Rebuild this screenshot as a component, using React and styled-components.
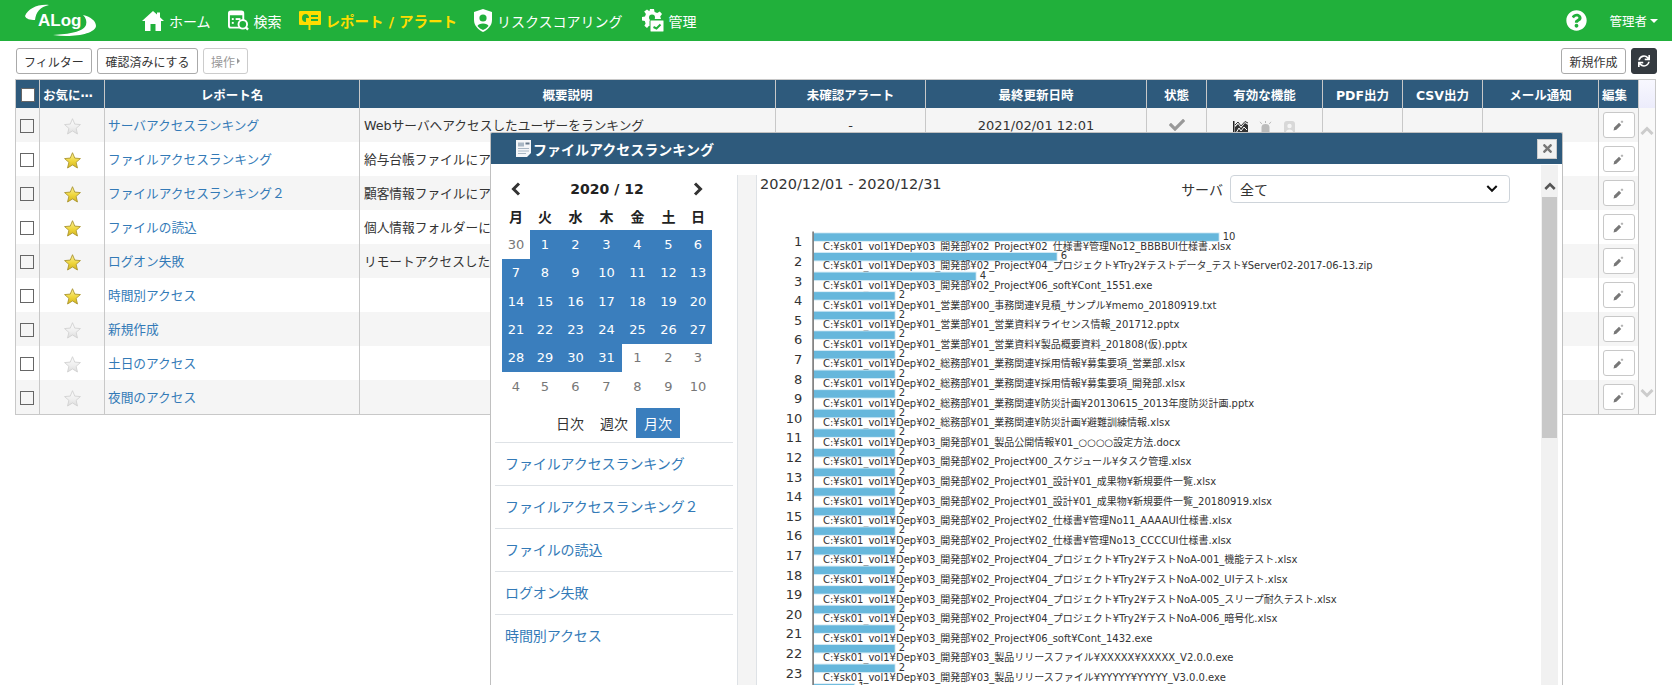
import React from 'react';
import styled, { createGlobalStyle } from 'styled-components';
import { FaCheck, FaSync, FaTimes, FaQuestionCircle } from 'react-icons/fa';

const green = '#21b03b';
const navy = '#2e5a7c';
const blue = '#3a7ebd';
const link = '#337ab7';

const GlobalStyle = createGlobalStyle`
  html, body {
    margin: 0;
    height: 685px;
    overflow: hidden;
    background: #fff;
    color: #333;
    font-family: "DejaVu Sans", "Noto Sans CJK JP", sans-serif;
    font-size: 13px;
  }
  * { box-sizing: border-box; }
`;

const Header = styled.header`
  display: flex;
  align-items: center;
  height: 41px;
  padding-left: 25px;
  padding-right: 14px;
  background: ${green};
  color: #fff;
`;

const Logo = styled.svg`
  display: block;
  width: 71px;
  height: 36px;
  margin-right: 46px;
  margin-top: 2px;
`;

const Nav = styled.nav`
  display: flex;
  align-items: center;
  gap: 17px;
`;

const NavItem = styled.a`
  display: flex;
  align-items: center;
  gap: 5px;
  margin-left: ${p => p.$ml || 0}px;
  font-size: ${p => (p.$active ? '14.5px' : '14px')};
  color: ${p => (p.$active ? '#ffdc00' : '#fff')};
  font-weight: ${p => (p.$active ? 700 : 400)};
  white-space: nowrap;
  svg { display: block; flex: none; }
`;

const HeaderRight = styled.div`
  display: flex;
  align-items: center;
  gap: 22px;
  margin-left: auto;
`;

const UserMenu = styled.span`
  display: flex;
  align-items: center;
  gap: 3px;
  font-size: 12.5px;
  &::after {
    content: '';
    border-top: 4px solid #fff;
    border-left: 4px solid transparent;
    border-right: 4px solid transparent;
  }
`;

const Toolbar = styled.div`
  display: flex;
  align-items: center;
  justify-content: space-between;
  padding: 7px 15px 5px 16px;
`;

const ButtonRow = styled.div`
  display: flex;
  gap: 5px;
`;

const Button = styled.button`
  display: flex;
  align-items: center;
  justify-content: center;
  height: 26px;
  width: ${p => p.$w}px;
  padding: 0;
  background: ${p => (p.$dark ? '#343a40' : '#fff')};
  border: 1px solid ${p => (p.$dark ? '#343a40' : p.$disabled ? '#ccc' : '#aaa')};
  border-radius: 3px;
  font: inherit;
  font-size: 12px;
  color: ${p => (p.$dark ? '#fff' : p.$disabled ? '#999' : '#333')};
`;

const Caret = styled.span`
  margin-left: 2px;
  border-left: 3px solid #999;
  border-top: 3px solid transparent;
  border-bottom: 3px solid transparent;
`;

const TableFrame = styled.div`
  display: flex;
  width: 1641px;
  margin-left: 15px;
  border: 1px solid #c8c8c8;
`;

const Table = styled.table`
  width: 1622px;
  table-layout: fixed;
  border-collapse: separate;
  border-spacing: 0;
`;

const Th = styled.th`
  height: 28px;
  padding: 0 0 0 ${p => (p.$left ? '3px' : '0')};
  background: ${navy};
  color: #fff;
  font-size: 12.5px;
  font-weight: 700;
  text-align: ${p => (p.$left ? 'left' : 'center')};
  white-space: nowrap;
  overflow: hidden;
  border-left: 1px solid #c8c8c8;
  &:first-child { border-left: 0; }
`;

const Row = styled.tr`
  background: ${p => (p.$stripe ? '#f5f5f5' : '#fff')};
`;

const Td = styled.td`
  height: 34px;
  padding: 0;
  text-align: center;
  border-left: 1px solid #c8c8c8;
  white-space: nowrap;
  overflow: hidden;
  svg { vertical-align: middle; }
  &:first-child {
    border-left: 0;
    padding-right: 1px;
  }
`;

const TextCell = styled(Td)`
  padding: 0 4px 2px ${p => p.$pl || 4}px;
  text-align: left;
  font-size: 12.7px;
`;

const StarCell = styled(Td)`
  svg { margin-top: 2px; }
`;

const RowLink = styled.a`
  color: ${link};
`;

const Check = styled.span`
  display: inline-block;
  width: 14px;
  height: 14px;
  vertical-align: middle;
  border: 1px solid #666;
  background: ${p => (p.$head ? '#fff' : 'transparent')};
`;

const FeatureIcons = styled.div`
  display: flex;
  justify-content: center;
  gap: 11px;
  margin-top: 5px;
`;

const EditButton = styled.span`
  display: inline-flex;
  align-items: center;
  justify-content: center;
  width: 32px;
  height: 26px;
  background: #fff;
  border: 1px solid #c8c8c8;
  border-radius: 3px;
`;

const TableRail = styled.div`
  flex: 1;
  display: flex;
  flex-direction: column;
  border-left: 1px solid #c8c8c8;
  background: #f9f9f9;
`;

const RailHead = styled.div`
  height: 28px;
  background: linear-gradient(#f8f8ff, #ececfb);
`;

const RailBody = styled.div`
  flex: 1;
  display: flex;
  flex-direction: column;
  align-items: center;
  justify-content: space-between;
  padding: 18px 0 16px;
`;

const Modal = styled.section`
  position: fixed;
  top: 132px;
  left: 490px;
  width: 1073px;
  height: 553px;
  display: flex;
  flex-direction: column;
  overflow: hidden;
  background: #fff;
  border: 1px solid #c0c0c0;
  border-bottom: 0;
  border-radius: 2px 2px 0 0;
`;

const ModalHeader = styled.div`
  display: flex;
  align-items: center;
  flex: none;
  height: 31px;
  padding: 0 5px 0 25px;
  gap: 2px;
  background: ${navy};
  color: #fff;
  font-size: 14px;
  font-weight: 700;
`;

const CloseBox = styled.span`
  display: flex;
  align-items: center;
  justify-content: center;
  width: 20px;
  height: 20px;
  margin-left: auto;
  background: #f2f2f2;
  border: 1px solid #ccc;
  color: #777;
`;

const ModalBody = styled.div`
  flex: 1;
  display: flex;
  min-height: 0;
  padding-top: 1px;
`;

const LeftPane = styled.div`
  flex: none;
  width: 246px;
  padding: 11px 4px 0;
`;

const CalGrid = styled.div`
  display: grid;
  grid-template-columns: 28px 30px 31px 31px 31px 31px 28px;
  grid-auto-rows: 28.35px;
  align-items: stretch;
  width: 210px;
  margin-left: 7px;
`;

const MonthRow = styled.div`
  display: grid;
  grid-template-columns: 28px 1fr 28px;
  align-items: center;
  justify-items: center;
  width: 210px;
  height: 26px;
  margin-left: 7px;
  font-size: 14px;
  font-weight: 700;
  color: #222;
`;

const WeekDay = styled.div`
  display: flex;
  align-items: center;
  justify-content: center;
  font-size: 14px;
  font-weight: 700;
  color: #222;
`;

const Day = styled.div`
  display: flex;
  align-items: center;
  justify-content: center;
  background: ${p => (p.$active ? blue : 'transparent')};
  color: ${p => (p.$active ? '#fff' : '#777')};
`;

const RangeTabs = styled.div`
  display: flex;
  justify-content: flex-end;
  width: 210px;
  margin: 8px 0 4px 7px;
  padding-right: 32px;
`;

const RangeTab = styled.span`
  display: flex;
  align-items: center;
  justify-content: center;
  width: 44px;
  height: 30px;
  font-size: 14px;
  background: ${p => (p.$active ? blue : 'transparent')};
  color: ${p => (p.$active ? '#fff' : '#333')};
`;

const ReportItem = styled.a`
  display: flex;
  align-items: center;
  height: 43px;
  padding: 0 0 3px 10px;
  border-top: 1px solid #dee2e6;
  font-size: 14px;
  letter-spacing: -0.1px;
  color: ${link};
`;

const Gutter = styled.div`
  flex: none;
  width: 20px;
  margin-top: 10px;
  background: #f4f4f4;
  border-left: 1px solid #dee2e6;
  border-right: 1px solid #dee2e6;
`;

const ChartPane = styled.div`
  flex: 1;
  min-width: 0;
`;

const ChartTop = styled.div`
  display: flex;
  justify-content: space-between;
  height: 40px;
  padding: 10px 31px 0 3px;
`;

const DateRange = styled.div`
  font-size: 14.5px;
  line-height: 18px;
`;

const ServerFilter = styled.div`
  display: flex;
  align-items: center;
  gap: 7px;
  height: 28px;
  font-size: 14px;
`;

const SelectBox = styled.div`
  display: flex;
  align-items: center;
  justify-content: space-between;
  width: 280px;
  height: 28px;
  padding: 0 11px 0 9px;
  border: 1px solid #ced4da;
  border-radius: 4px;
`;

const Chart = styled.svg`
  display: block;
`;

const ModalRail = styled.div`
  flex: none;
  width: 17px;
  margin-right: 4px;
  background: #f1f1f1;
  display: flex;
  flex-direction: column;
  align-items: center;
  padding-top: 17px;
`;

const RailThumb = styled.div`
  width: 15px;
  height: 241px;
  margin-top: 7px;
  background: #c8c8c8;
`;

const ChevronSvg = styled.svg`
  display: block;
  flex: none;
`;

const Chevron = ({ dir = 'up', color = '#ccc', w = 14, h = 9, sw = 3 }) => (
  <ChevronSvg width={w} height={h} viewBox="0 0 14 9">
    <polyline
      points={dir === 'up' ? '1.5,8 7,2.5 12.5,8' : '1.5,1 7,6.5 12.5,1'}
      fill="none"
      stroke={color}
      strokeWidth={sw}
    />
  </ChevronSvg>
);

const Side = ({ left }) => (
  <svg width="10" height="14" viewBox="0 0 10 14">
    <polyline
      points={left ? '8,1.5 2.5,7 8,12.5' : '2,1.5 7.5,7 2,12.5'}
      fill="none"
      stroke="#333"
      strokeWidth="3"
    />
  </svg>
);

const Star = ({ on }) => (
  <svg width="17" height="17" viewBox="0 0 24 24">
    <defs>
      <linearGradient id={on ? 'star-on' : 'star-off'} x1="0" y1="0" x2="0" y2="1">
        <stop offset="0" stopColor={on ? '#fbf0a0' : '#fbfbfb'} />
        <stop offset="0.55" stopColor={on ? '#efd63a' : '#efefef'} />
        <stop offset="1" stopColor={on ? '#d2b322' : '#dcdcdc'} />
      </linearGradient>
    </defs>
    <polygon
      points="12,1 15.2,8.6 23.2,9.3 17.1,14.6 19,22.6 12,18.3 5,22.6 6.9,14.6 0.8,9.3 8.8,8.6"
      fill={`url(#${on ? 'star-on' : 'star-off'})`}
      stroke={on ? '#a8922a' : '#d0d0d0'}
      strokeWidth="1.2"
    />
  </svg>
);

const HomeIcon = () => (
  <svg width="22" height="20" viewBox="0 0 22 20">
    <path d="M11 0 L15 3.6 V1.5 H18 V6.3 L22 10 H19 V20 H13.5 V13 H8.5 V20 H3 V10 H0 Z" fill="#fff" />
  </svg>
);

const SearchIcon = () => (
  <svg width="21" height="21" viewBox="0 0 22 21">
    <rect x="1" y="1" width="15" height="17" rx="2" fill="none" stroke="#fff" strokeWidth="2" />
    <rect x="1" y="1" width="15" height="4" fill="#fff" />
    <rect x="4" y="8" width="2" height="2" fill="#fff" />
    <rect x="8" y="8" width="5" height="2" fill="#fff" />
    <rect x="4" y="12" width="2" height="2" fill="#fff" />
    <circle cx="15.5" cy="14.5" r="4.5" fill={green} stroke="#fff" strokeWidth="2" />
    <line x1="18.5" y1="17.5" x2="21" y2="20" stroke="#fff" strokeWidth="2.4" />
  </svg>
);

const ReportIcon = () => (
  <svg width="22" height="19" viewBox="0 0 22 19">
    <rect x="0" y="0" width="22" height="14" rx="1" fill="#ffdc00" />
    <rect x="9.5" y="14" width="2" height="5" fill="#ffdc00" />
    <path d="M7 3 A4 4 0 1 0 7 11 L7 7 L10 7 A4 4 0 0 0 7 3 Z" fill={green} />
    <rect x="12" y="4" width="7" height="2" fill={green} />
    <rect x="12" y="8" width="7" height="2" fill={green} />
  </svg>
);

const ShieldIcon = () => (
  <svg width="18" height="23" viewBox="0 0 18 23">
    <path d="M9 0 L18 3 V11 C18 17 13 21 9 23 C5 21 0 17 0 11 V3 Z" fill="#fff" />
    <circle cx="9" cy="9" r="3.6" fill={green} />
    <path d="M3.5 17 C4 13.5 14 13.5 14.5 17 C13 19 11 20 9 21 C7 20 5 19 3.5 17 Z" fill={green} />
  </svg>
);

const GearIcon = () => (
  <svg width="22" height="23" viewBox="0 0 22 23">
    <path
      d="M8 0 H12 L12.6 3 L15.2 4.1 L17.8 2.4 L20 5 L18.2 7.4 L19 10 H9 V17 H6.8 L5 19 L2.4 16.8 L3.6 14.4 L2.8 12 L0 11.4 V8 L3 7.4 L3.9 4.9 L2.2 2.6 L5 0.4 L7.4 2.2 Z"
      fill="#fff"
    />
    <circle cx="10" cy="8.6" r="3" fill={green} />
    <rect x="8" y="11" width="14" height="12" rx="1" fill="#fff" stroke={green} strokeWidth="1" />
    <polyline points="11.5,18 14.5,19.5 18.5,15.5" fill="none" stroke={green} strokeWidth="2" />
  </svg>
);

const DocIcon = () => (
  <svg width="15" height="17" viewBox="0 0 15 17">
    <path d="M0 0 H15 V13 L11 17 H0 Z" fill="#f4f6f8" />
    <rect x="2" y="2.5" width="6" height="4" fill="#a9b7c4" />
    <rect x="9.5" y="2.5" width="4" height="2" fill="#66788a" />
    <rect x="2" y="8" width="11" height="1" fill="#a9b7c4" />
    <rect x="2" y="10.5" width="11" height="1" fill="#a9b7c4" />
    <rect x="2" y="13" width="8" height="1" fill="#a9b7c4" />
  </svg>
);

const PencilIcon = () => (
  <svg width="11" height="11" viewBox="0 0 11 11">
    <path d="M0.5 10.5 L1.2 7.6 L6 2.8 L8.2 5 L3.4 9.8 Z" fill="#777" />
    <path d="M9 0.6 V3 M7.8 1.8 H10.2" stroke="#999" strokeWidth="0.8" />
  </svg>
);

const LineChartIcon = () => (
  <svg width="15" height="13" viewBox="0 0 15 13">
    <rect x="0" y="0" width="1.5" height="13" fill="#222" />
    <path d="M2 13 V6 L5 3 L8 7 L12 2 L15 4 V13 Z" fill="#333" />
    <polyline points="2,4 5,1 8,5 12,0.5 15,2" fill="none" stroke="#333" strokeWidth="1" />
    <polyline points="3,12 6,7 8,10 11,6 14,9" fill="none" stroke="#fff" strokeWidth="1" />
  </svg>
);

const SirenIcon = () => (
  <svg width="13" height="13" viewBox="0 0 13 13">
    <path d="M2.5 13 V6.5 A4 3.4 0 0 1 10.5 6.5 V13 Z" fill="#bbb" />
    <path d="M6.5 0 V2 M1 0.8 L2.8 3 M12 0.8 L10.2 3" stroke="#bbb" strokeWidth="1" />
  </svg>
);

const BadgeIcon = () => (
  <svg width="13" height="13" viewBox="0 0 13 13">
    <path d="M1 13 V3 A3 3 0 0 1 4 0 H9 A3 3 0 0 1 12 3 V13 Z" fill="#d8d8d8" />
    <circle cx="6.5" cy="5" r="2.2" fill="#f5f5f5" />
    <path d="M3 11 C3 7.6 10 7.6 10 11 Z" fill="#f5f5f5" />
  </svg>
);

const columns = [
  ['', 23], ['お気に⋯', 65, true], ['レポート名', 255], ['概要説明', 416], ['未確認アラート', 150],
  ['最終更新日時', 221], ['状態', 60], ['有効な機能', 116], ['PDF出力', 80], ['CSV出力', 80],
  ['メール通知', 116], ['編集', 40, true],
];

const reports = [
  { name: 'サーバアクセスランキング', star: false, desc: 'Webサーバへアクセスしたユーザーをランキング', first: true },
  { name: 'ファイルアクセスランキング', star: true, desc: '給与台帳ファイルにアクセスしたユーザーをランキング' },
  { name: 'ファイルアクセスランキング２', star: true, desc: '顧客情報ファイルにアクセスしたユーザーをランキング' },
  { name: 'ファイルの読込', star: true, desc: '個人情報フォルダーに対するファイルの読込' },
  { name: 'ログオン失敗', star: true, desc: 'リモートアクセスしたユーザーのログオン失敗' },
  { name: '時間別アクセス', star: true, desc: '' },
  { name: '新規作成', star: false, desc: '' },
  { name: '土日のアクセス', star: false, desc: '' },
  { name: '夜間のアクセス', star: false, desc: '' },
];

const weekDays = ['月', '火', '水', '木', '金', '土', '日'];

const days = [
  30,
  ...Array.from({ length: 31 }, (_, i) => i + 1),
  ...Array.from({ length: 10 }, (_, i) => i + 1),
];

const sideReports = ['ファイルアクセスランキング', 'ファイルアクセスランキング２', 'ファイルの読込', 'ログオン失敗', '時間別アクセス'];

const dev = 'C:¥sk01_vol1¥Dep¥03_開発部¥';
const sales = 'C:¥sk01_vol1¥Dep¥01_営業部¥';
const admin = 'C:¥sk01_vol1¥Dep¥02_総務部¥';
const try2 = `${dev}02_Project¥04_プロジェクト¥Try2¥`;

const ranking = [
  [10, `${dev}02_Project¥02_仕様書¥管理No12_BBBBUI仕様書.xlsx`],
  [6, `${try2}テストデータ_テスト¥Server02-2017-06-13.zip`],
  [4, `${dev}02_Project¥06_soft¥Cont_1551.exe`],
  [2, `${sales}00_事務関連¥見積_サンプル¥memo_20180919.txt`],
  [2, `${sales}01_営業資料¥ライセンス情報_201712.pptx`],
  [2, `${sales}01_営業資料¥製品概要資料_201808(仮).pptx`],
  [2, `${admin}01_業務関連¥採用情報¥募集要項_営業部.xlsx`],
  [2, `${admin}01_業務関連¥採用情報¥募集要項_開発部.xlsx`],
  [2, `${admin}01_業務関連¥防災計画¥20130615_2013年度防災計画.pptx`],
  [2, `${admin}01_業務関連¥防災計画¥避難訓練情報.xlsx`],
  [2, `${dev}01_製品公開情報¥01_○○○○設定方法.docx`],
  [2, `${dev}02_Project¥00_スケジュール¥タスク管理.xlsx`],
  [2, `${dev}02_Project¥01_設計¥01_成果物¥新規要件一覧.xlsx`],
  [2, `${dev}02_Project¥01_設計¥01_成果物¥新規要件一覧_20180919.xlsx`],
  [2, `${dev}02_Project¥02_仕様書¥管理No11_AAAAUI仕様書.xlsx`],
  [2, `${dev}02_Project¥02_仕様書¥管理No13_CCCCUI仕様書.xlsx`],
  [2, `${try2}テストNoA-001_機能テスト.xlsx`],
  [2, `${try2}テストNoA-002_UIテスト.xlsx`],
  [2, `${try2}テストNoA-005_スリープ耐久テスト.xlsx`],
  [2, `${try2}テストNoA-006_暗号化.xlsx`],
  [2, `${dev}02_Project¥06_soft¥Cont_1432.exe`],
  [2, `${dev}03_製品リリースファイル¥XXXXX¥XXXXX_V2.0.0.exe`],
  [2, `${dev}03_製品リリースファイル¥YYYYY¥YYYYY_V3.0.0.exe`],
  [1, ''],
];

const RankingChart = () => {
  // chart origin on the page is 757,205
  const pitch = 19.6;
  const axis = 56.7;
  const unit = 40.5;
  return (
    <Chart width="785" height="480" viewBox="0 0 785 480">
      {ranking.map(([value, path], i) => {
        const top = 28.3 + i * pitch;
        return (
          <g key={i}>
            <rect x={axis - 1} y={top - 1} width={value * unit + 2} height="9.6" fill="#dceef7" />
            <rect x={axis} y={top} width={value * unit} height="7.6" fill="#66b7dc" />
            <text x={axis + value * unit + 4} y={top + (i === 0 ? 7 : 6)} fontSize="10" fill="#333">{value}</text>
            {path && (
              <>
                <text x="45.3" y={top + 13} textAnchor="end" fontSize="13" fill="#333">{i + 1}</text>
                <text x="66" y={top + 16.5} fontSize="10" fill="#333">{path}</text>
              </>
            )}
          </g>
        );
      })}
      <rect x="55.3" y="26.5" width="1.6" height="460" fill="#777" />
    </Chart>
  );
};

const App = () => (
  <>
    <GlobalStyle />
    <Header>
      <Logo viewBox="0 0 71 36">
        <path d="M0 12 C3 5 12 0 24 1 C15 3 11 8 10 16 C5 16 1 15 0 12 Z" fill="#fff" />
        <path d="M58 11 C66 13 71 17 71 22 C70 30 48 34 28 31 C44 30 58 28 61 21 C62 17 61 14 58 11 Z" fill="#fff" />
        <text x="13" y="22" fontFamily="Liberation Sans" fontWeight="700" fontSize="17" fill="#fff">ALog</text>
      </Logo>
      <Nav>
        <NavItem><HomeIcon />ホーム</NavItem>
        <NavItem><SearchIcon />検索</NavItem>
        <NavItem $active><ReportIcon />レポート / アラート</NavItem>
        <NavItem><ShieldIcon />リスクスコアリング</NavItem>
        <NavItem $ml={2}><GearIcon />管理</NavItem>
      </Nav>
      <HeaderRight>
        <FaQuestionCircle size={21} />
        <UserMenu>管理者</UserMenu>
      </HeaderRight>
    </Header>

    <Toolbar>
      <ButtonRow>
        <Button $w={76}>フィルター</Button>
        <Button $w={101}>確認済みにする</Button>
        <Button $w={45} $disabled>操作<Caret /></Button>
      </ButtonRow>
      <ButtonRow>
        <Button $w={65}>新規作成</Button>
        <Button $w={26} $dark><FaSync size={12} /></Button>
      </ButtonRow>
    </Toolbar>

    <TableFrame>
      <Table>
        <colgroup>
          {columns.map(([label, width]) => <col key={label} style={{ width }} />)}
        </colgroup>
        <thead>
          <tr>
            {columns.map(([label, , left]) => (
              <Th key={label} $left={left}>{label || <Check $head />}</Th>
            ))}
          </tr>
        </thead>
        <tbody>
          {reports.map((report, i) => (
            <Row key={report.name} $stripe={i % 2 === 0}>
              <Td><Check /></Td>
              <StarCell><Star on={report.star} /></StarCell>
              <TextCell $pl={3}><RowLink>{report.name}</RowLink></TextCell>
              <TextCell>{report.desc}</TextCell>
              <Td>{report.first && '-'}</Td>
              <Td>{report.first && '2021/02/01 12:01'}</Td>
              <Td>{report.first && <FaCheck size={16} color="#999" />}</Td>
              <Td>
                {report.first && (
                  <FeatureIcons>
                    <LineChartIcon />
                    <SirenIcon />
                    <BadgeIcon />
                  </FeatureIcons>
                )}
              </Td>
              <Td />
              <Td />
              <Td />
              <Td><EditButton><PencilIcon /></EditButton></Td>
            </Row>
          ))}
        </tbody>
      </Table>
      <TableRail>
        <RailHead />
        <RailBody>
          <Chevron dir="up" />
          <Chevron dir="down" />
        </RailBody>
      </TableRail>
    </TableFrame>

    <Modal>
      <ModalHeader>
        <DocIcon />
        ファイルアクセスランキング
        <CloseBox><FaTimes size={13} /></CloseBox>
      </ModalHeader>
      <ModalBody>
        <LeftPane>
          <MonthRow>
            <Side left />
            <span>2020 / 12</span>
            <Side />
          </MonthRow>
          <CalGrid>
            {weekDays.map(d => <WeekDay key={d}>{d}</WeekDay>)}
            {days.map((d, i) => (
              <Day key={i} $active={i >= 1 && i <= 31}>{d}</Day>
            ))}
          </CalGrid>
          <RangeTabs>
            <RangeTab>日次</RangeTab>
            <RangeTab>週次</RangeTab>
            <RangeTab $active>月次</RangeTab>
          </RangeTabs>
          {sideReports.map(name => <ReportItem key={name}>{name}</ReportItem>)}
        </LeftPane>
        <Gutter />
        <ChartPane>
          <ChartTop>
            <DateRange>2020/12/01 - 2020/12/31</DateRange>
            <ServerFilter>
              サーバ
              <SelectBox>
                全て
                <Chevron dir="down" color="#111" w={12} h={8} sw={2.4} />
              </SelectBox>
            </ServerFilter>
          </ChartTop>
          <RankingChart />
        </ChartPane>
        <ModalRail>
          <Chevron dir="up" color="#555" w={12} h={8} />
          <RailThumb />
        </ModalRail>
      </ModalBody>
    </Modal>
  </>
);

export default App;
